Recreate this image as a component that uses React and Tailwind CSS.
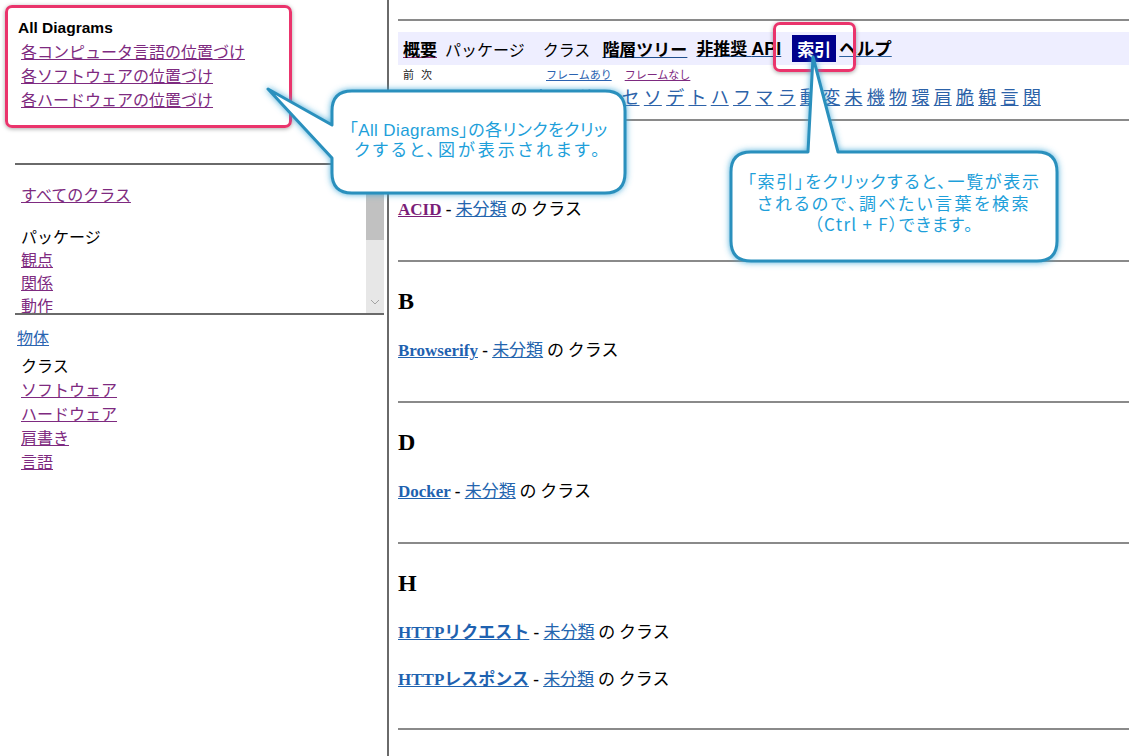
import React from "react";

const JP = "font-['Noto_Sans_CJK_JP',sans-serif]";
const SANS = "font-['Liberation_Sans','Noto_Sans_CJK_JP',sans-serif]";
const SERIF = "font-['Liberation_Serif','Noto_Sans_CJK_JP',serif]";

const diagrams = ["各コンピュータ言語の位置づけ", "各ソフトウェアの位置づけ", "各ハードウェアの位置づけ"];
const packages = ["観点", "関係", "動作"];
const classes = ["ソフトウェア", "ハードウェア", "肩書き", "言語"];

const hiddenLetters = ["A", "B", "D", "H", "ア", "エ", "キ", "ク", "コ", "サ", "シ"];
const letters = ["セ", "ソ", "デ", "ト", "ハ", "フ", "マ", "ラ", "動", "変", "未", "機", "物", "環", "肩", "脆", "観", "言", "関"];

const sections = [
  { head: "A", items: [{ name: "ACID", visited: true }] },
  { head: "B", items: [{ name: "Browserify" }] },
  { head: "D", items: [{ name: "Docker" }] },
  { head: "H", items: [{ name: "HTTPリクエスト" }, { name: "HTTPレスポンス" }], last: true },
];

const Entry = ({ name, visited }) => (
  <div className={`h-[24px] leading-[24px] text-[17px] text-black whitespace-nowrap ${JP}`}>
    <a className={`${SERIF} font-bold underline ${visited ? "text-[#7a1e78]" : "text-[#1f62b0]"}`}>{name}</a>
    <b className={SERIF}> - </b>
    <a className="underline text-[#2465ae]">未分類</a>
    <span> の クラス</span>
  </div>
);

const LeftFrame = () => (
  <div className="w-[384px] flex flex-col">
    {/* top frame */}
    <div className="h-[163px] pt-[18px]">
      <div className={`pl-[18px] text-[15.5px] font-bold leading-[20px] text-black ${SANS}`}>All Diagrams</div>
      <div className={`mt-[1px] pl-[21px] flex flex-col items-start text-[16px] ${JP}`}>
        {diagrams.map((d) => (
          <a key={d} className="leading-[24px] underline text-[#7e2a80]">{d}</a>
        ))}
      </div>
    </div>
    <div className="ml-[15px] h-[2px] bg-[#6a6a6a]" />

    {/* package list frame */}
    <div className="h-[148px] flex">
      <div className={`flex-1 overflow-hidden pl-[21px] pt-[17px] text-[16px] ${JP}`}>
        <a className="block w-fit leading-[24px] underline text-[#7e2a80]">すべてのクラス</a>
        <div className="mt-[18px] leading-[24px] text-black">パッケージ</div>
        <div className="flex flex-col items-start">
          {packages.map((p) => (
            <a key={p} className="leading-[23px] underline text-[#7e2a80]">{p}</a>
          ))}
        </div>
      </div>
      <div className="w-[18px] bg-[#e7e7e7] flex flex-col">
        <div className="h-[75px] bg-[#c1c1c1]" />
        <div className="flex-1" />
        <div className="h-[22px] flex items-center justify-center">
          <svg width="10" height="6" viewBox="0 0 10 6">
            <path d="M1 1 L5 5 L9 1" fill="none" stroke="#a3a3a3" strokeWidth="1" />
          </svg>
        </div>
      </div>
    </div>
    <div className="ml-[15px] h-[2px] bg-[#6a6a6a]" />

    {/* class list frame */}
    <div className={`pt-[10px] text-[16px] ${JP}`}>
      <a className="block w-fit ml-[17px] leading-[24px] underline text-[#2a64b0]">物体</a>
      <div className="mt-[4px] pl-[21px] flex flex-col items-start">
        <div className="leading-[24px] text-black">クラス</div>
        {classes.map((c) => (
          <a key={c} className="leading-[24px] underline text-[#7e2a80]">{c}</a>
        ))}
      </div>
    </div>
  </div>
);

const RightFrame = () => (
  <div className="flex-1 pl-[9px] pt-[19px] overflow-hidden">
    <div className="h-[2px] bg-[#8a8a8a]" />

    {/* nav bar */}
    <div className={`mt-[11px] h-[33px] bg-[#eeeeff] flex items-center pl-[5px] whitespace-nowrap text-black ${JP}`}>
      <a className="text-[17px] font-bold underline decoration-[#8a2a7a]">概要</a>
      <span className="ml-[8px] text-[16px]">パッケージ</span>
      <span className="ml-[18px] text-[16px]">クラス</span>
      <a className="ml-[12px] text-[17px] font-bold underline decoration-[#1f4f8f]">階層ツリー</a>
      <a className="ml-[9px] text-[17px] font-bold underline decoration-[#1f4f8f]">
        非推奨 <span className={`${SANS} text-[18px]`}>API</span>
      </a>
      <span className="ml-[11px] h-[27px] px-[5px] bg-[#00008b] text-white text-[17px] font-bold leading-[27px]">索引</span>
      <a className="ml-[3px] text-[17.5px] font-bold underline decoration-[#2a5f9f]">ヘルプ</a>
    </div>

    {/* sub nav */}
    <div className={`h-[18px] flex items-center text-[11px] whitespace-nowrap ${JP}`}>
      <span className="ml-[5px] text-[#222]">前</span>
      <span className="ml-[7px] text-[#222]">次</span>
      <a className="ml-[114px] underline text-[#2a62b0]">フレームあり</a>
      <a className="ml-[13px] underline text-[#7e2a80]">フレームなし</a>
    </div>

    {/* letters */}
    <div className={`h-[26px] flex items-center pl-[2px] gap-[4.3px] text-[18px] leading-[24px] whitespace-nowrap text-[#2c62a8] ${JP}`}>
      {hiddenLetters.concat(letters).map((l) => (
        <a key={l} className="underline">{l}</a>
      ))}
    </div>

    {/* index sections */}
    <div className="mt-[10px]">
      {sections.map((s) => (
        <div key={s.head}>
          <div className="h-[2px] bg-[#8a8a8a]" />
          <div className={`pt-[27px] ${s.last ? "pb-[38px]" : "pb-[40px]"}`}>
            <div className={`${SERIF} text-[24px] font-bold leading-[24px] text-black`}>{s.head}</div>
            <div className="mt-[24px] flex flex-col gap-[23px]">
              {s.items.map((it) => (
                <Entry key={it.name} {...it} />
              ))}
            </div>
          </div>
        </div>
      ))}
      <div className="h-[2px] bg-[#8a8a8a]" />
    </div>
  </div>
);

export default function App() {
  return (
    <div className="relative w-[1129px] h-[756px] overflow-hidden bg-white">
      <div className="flex h-full">
        <LeftFrame />
        <div className="w-[3px]" />
        <div className="w-[2px] bg-[#6a6a6a]" />
        <RightFrame />
      </div>

      {/* red highlight boxes */}
      <div className="absolute left-[5px] top-[5px] w-[287px] h-[123px] rounded-[7px] border-[3px] border-[#ea346c] shadow-[0_1px_4px_rgba(0,0,0,0.35)]" />
      <div className="absolute left-[773px] top-[22px] w-[83px] h-[50px] rounded-[7px] border-[3px] border-[#ea346c] shadow-[0_1px_4px_rgba(0,0,0,0.35)]" />

      {/* callout bubbles */}
      <svg className="absolute left-0 top-0 pointer-events-none" width="1129" height="756" viewBox="0 0 1129 756">
        <defs>
          <filter id="glow" x="-20%" y="-40%" width="140%" height="180%">
            <feDropShadow dx="0" dy="0" stdDeviation="3" floodColor="#3aa6d6" floodOpacity="0.9" />
          </filter>
        </defs>
        <path
          d="M352 91 H605 Q625 91 625 111 V173 Q625 193 605 193 H352 Q332 193 332 173 V158 L268 89 L332 125 V111 Q332 91 352 91 Z"
          fill="#ffffff"
          stroke="#2a90bd"
          strokeWidth="3"
          strokeLinejoin="round"
          filter="url(#glow)"
        />
        <path
          d="M751 152 H808 L813 57 L838 152 H1037 Q1057 152 1057 172 V241 Q1057 261 1037 261 H751 Q731 261 731 241 V172 Q731 152 751 152 Z"
          fill="#ffffff"
          stroke="#2a90bd"
          strokeWidth="3"
          strokeLinejoin="round"
          filter="url(#glow)"
        />
      </svg>

      <div className={`absolute left-[332px] top-[91px] w-[293px] h-[100px] flex flex-col items-center justify-center text-[17px] leading-[20px] text-[#1e9fda] whitespace-nowrap [font-feature-settings:'palt'] ${SANS}`}>
        <div className="tracking-[0.4px]">「All Diagrams」の各リンクをクリッ</div>
        <div className="tracking-[3px]">クすると、図が表示されます。</div>
      </div>
      <div className={`absolute left-[731px] top-[148px] w-[326px] h-[109px] flex flex-col items-center justify-center text-[17px] leading-[21.5px] text-[#1e9fda] whitespace-nowrap [font-feature-settings:'palt'] ${JP}`}>
        <div className="h-[21.5px] tracking-[1.7px]">「索引」をクリックすると、一覧が表示</div>
        <div className="h-[21.5px] tracking-[2.4px]">されるので、調べたい言葉を検索</div>
        <div className="h-[21.5px] tracking-[1.3px]">（Ctrl + F）できます。</div>
      </div>
    </div>
  );
}
